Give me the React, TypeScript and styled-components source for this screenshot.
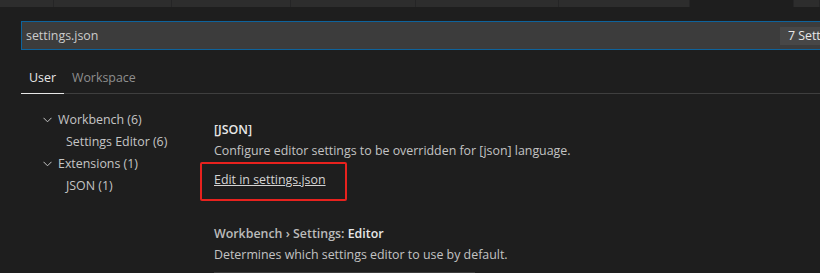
import styled, { createGlobalStyle } from 'styled-components';

const GlobalStyle = createGlobalStyle`
  html, body {
    margin: 0;
    padding: 0;
    background: #1e1e1e;
    overflow: hidden;
  }
  body {
    font-family: "Open Sans", "Noto Sans", sans-serif;
    font-size: 12.4px;
    color: #cccccc;
  }
`;

// editor tabs above the settings page (just a thin sliver is visible)
const editorTabs = [
  { width: 54 },
  { width: 118 },
  { width: 119 },
  { width: 125 },
  { width: 143 },
  { width: 131 },
  { width: 104, active: true },
  { width: 26 },
];

const treeRows = [
  { label: 'Workbench (6)', level: 0 },
  { label: 'Settings Editor (6)', level: 1 },
  { label: 'Extensions (1)', level: 0 },
  { label: 'JSON (1)', level: 1 },
];

const Chevron = () => (
  <svg width="9" height="6" viewBox="0 0 9 6" fill="none">
    <path d="M0.5 0.8 L4.5 4.8 L8.5 0.8" stroke="#c5c5c5" strokeWidth="1" />
  </svg>
);

const App = () => {
  return (
    <Page>
      <GlobalStyle />
      <TabStrip>
        {editorTabs.map((t, i) => (
          <EditorTab key={i} $width={t.width} $active={!!t.active} />
        ))}
      </TabStrip>

      <SearchRow>
        <SearchBox>
          <Query>settings.json</Query>
          <CountBadge>7 Settings Found</CountBadge>
        </SearchBox>
      </SearchRow>

      <ScopeTabs>
        <ScopeTab $active>User</ScopeTab>
        <ScopeTab>Workspace</ScopeTab>
      </ScopeTabs>

      <Body>
        <Tree>
          {treeRows.map((r) => (
            <TreeRow key={r.label} $level={r.level}>
              {r.level === 0 && (
                <ChevronBox>
                  <Chevron />
                </ChevronBox>
              )}
              {r.label}
            </TreeRow>
          ))}
        </Tree>

        <Settings>
          <SettingTitle>[JSON]</SettingTitle>
          <SettingDesc>Configure editor settings to be overridden for [json] language.</SettingDesc>
          <Highlight>
            <EditLink>Edit in settings.json</EditLink>
          </Highlight>

          <SettingTitle $spaced>
            <Category>Workbench › Settings: </Category>Editor
          </SettingTitle>
          <SettingDesc>Determines which settings editor to use by default.</SettingDesc>
          <SelectBox />
        </Settings>
      </Body>
    </Page>
  );
};

const Page = styled.div`
  width: 820px;
  height: 273px;
  overflow: hidden;
  background: #1e1e1e;
`;

const TabStrip = styled.div`
  display: flex;
  height: 7px;
`;

const EditorTab = styled.div<{ $width: number; $active?: boolean }>`
  flex: none;
  width: ${(p) => p.$width}px;
  height: 100%;
  box-sizing: border-box;
  background: ${(p) => (p.$active ? '#1e1e1e' : '#2d2d2d')};
  border-right: 1px solid #252526;
`;

const SearchRow = styled.div`
  padding: 14px 0 0 21px;
`;

const SearchBox = styled.div`
  display: flex;
  align-items: center;
  box-sizing: border-box;
  width: 876px;
  height: 29px;
  background: #3c3c3c;
  border: 1px solid #0e639c;
  padding: 0 4px 0 4px;
`;

const Query = styled.div`
  flex: 1;
  color: #cccccc;
  line-height: 18px;
`;

const CountBadge = styled.div`
  height: 18px;
  line-height: 18px;
  padding: 0 8px;
  background: #474747;
  color: #e8e8e8;
  white-space: nowrap;
`;

const ScopeTabs = styled.div`
  display: flex;
  margin: 14px 0 0 21px;
  height: 30px;
  box-shadow: inset 0 -1px 0 #3f3f3f;
`;

const ScopeTab = styled.div<{ $active?: boolean }>`
  box-sizing: border-box;
  height: 30px;
  padding: 5px 8px 0;
  line-height: 18px;
  color: ${(p) => (p.$active ? '#e7e7e7' : '#8f8f8f')};
  border-bottom: 1px solid ${(p) => (p.$active ? '#e7e7e7' : 'transparent')};
`;

const Body = styled.div`
  display: flex;
`;

const Tree = styled.div`
  width: 214px;
  flex: none;
  padding-top: 15px;
`;

const TreeRow = styled.div<{ $level: number }>`
  display: flex;
  align-items: center;
  height: 22px;
  line-height: 22px;
  padding-left: ${(p) => (p.$level === 0 ? 40 : 66)}px;
  color: #c5c5c5;
  white-space: nowrap;
`;

const ChevronBox = styled.span`
  display: inline-flex;
  align-items: center;
  width: 18px;
  padding-left: 3px;
  box-sizing: border-box;
`;

const Settings = styled.div`
  flex: 1;
  padding-top: 26px;
`;

const SettingTitle = styled.div<{ $spaced?: boolean }>`
  font-weight: 600;
  line-height: 20px;
  color: #e7e7e7;
  margin-bottom: 1px;
  margin-top: ${(p) => (p.$spaced ? 23 : 0)}px;
`;

const Category = styled.span`
  color: #bbbbbb;
`;

const SettingDesc = styled.div`
  line-height: 20px;
  color: #c3c3c3;
`;

const Highlight = styled.div`
  box-sizing: border-box;
  width: 147px;
  height: 39px;
  margin: 1px 0 0 -14px;
  padding: 6px 0 0 12px;
  border: 2px solid #e8221e;
  border-radius: 2px;
`;

const EditLink = styled.span`
  line-height: 20px;
  color: #d4d4d4;
  text-decoration: underline;
`;

const SelectBox = styled.div`
  margin-top: 7px;
  width: 261px;
  height: 26px;
  background: #3c3c3c;
`;

export default App;
